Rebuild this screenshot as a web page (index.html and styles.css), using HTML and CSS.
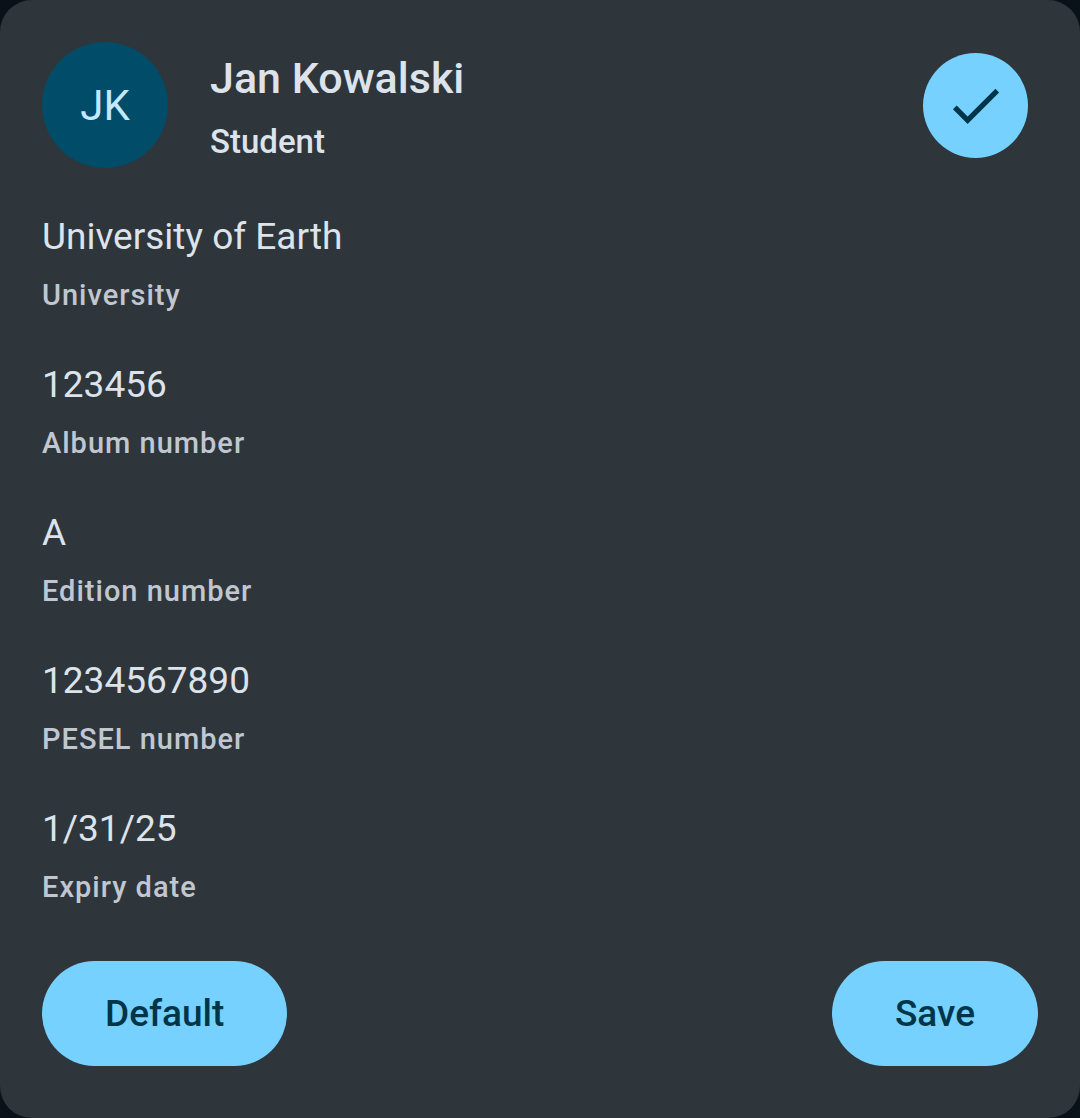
FILE: index.html
```html
<!DOCTYPE html>
<html lang="en">
<head>
<meta charset="utf-8">
<meta name="viewport" content="width=device-width, initial-scale=1">
<title>Student card</title>
<link rel="stylesheet" href="styles.css">
</head>
<body>
<main class="card">
  <header class="card-header">
    <div class="avatar">JK</div>
    <div class="identity">
      <h1 class="name">Jan Kowalski</h1>
      <p class="role">Student</p>
    </div>
    <button class="confirm" type="button" aria-label="Confirm">
      <svg class="confirm-icon" viewBox="0 0 24 24" aria-hidden="true"><path d="M9 16.17 4.83 12l-1.42 1.41L9 19 21 7l-1.41-1.41z"/></svg>
    </button>
  </header>
  <dl class="details">
    <div class="field"><dd class="value">University of Earth</dd><dt class="label">University</dt></div>
    <div class="field"><dd class="value">123456</dd><dt class="label">Album number</dt></div>
    <div class="field"><dd class="value">A</dd><dt class="label">Edition number</dt></div>
    <div class="field"><dd class="value">1234567890</dd><dt class="label">PESEL number</dt></div>
    <div class="field"><dd class="value">1/31/25</dd><dt class="label">Expiry date</dt></div>
  </dl>
  <footer class="actions">
    <button class="button" type="button">Default</button>
    <button class="button" type="button">Save</button>
  </footer>
</main>
</body>
</html>
```
FILE: styles.css
```css
* {
  box-sizing: border-box;
}

body {
  margin: 0;
  background: #0a1219;
  font-family: Roboto, "Liberation Sans", sans-serif;
  color: #dde3eb;
}

.card {
  display: flex;
  flex-direction: column;
  min-height: 100vh;
  padding: 42px;
  background: #2e353b;
  border-radius: 32px;
}

.card-header {
  display: flex;
  align-items: center;
  padding-right: 10px;
}

.avatar {
  display: grid;
  place-items: center;
  width: 126px;
  height: 126px;
  border-radius: 50%;
  background: #004c69;
  color: #c3e8ff;
  font-size: 42px;
}

.identity {
  display: flex;
  flex: 1;
  flex-direction: column;
  gap: 8px;
  padding: 6px 0 0 42px;
}

.name,
.role {
  margin: 0;
  font-weight: 500;
}

.name {
  font-size: 43px;
  line-height: 60px;
}

.role {
  font-size: 33px;
  line-height: 52px;
}

.confirm {
  display: grid;
  place-items: center;
  width: 105px;
  height: 105px;
  padding: 0;
  border: 0;
  border-radius: 50%;
  background: #76d1ff;
}

.confirm-icon {
  width: 63px;
  height: 63px;
  fill: #003549;
}

.details {
  display: grid;
  gap: 32px;
  margin: 40px 0 45px;
}

.field {
  display: flex;
  flex-direction: column;
}

.value {
  margin: 0;
  font-size: 37px;
  line-height: 58px;
}

.label {
  color: #c0c7d0;
  font-size: 29px;
  font-weight: 500;
  line-height: 58px;
  letter-spacing: 1px;
}

.actions {
  display: flex;
  justify-content: space-between;
}

.button {
  height: 105px;
  padding: 0 63px;
  border: 0;
  border-radius: 53px;
  background: #76d1ff;
  color: #003549;
  font: 500 37px Roboto, "Liberation Sans", sans-serif;
}
```
